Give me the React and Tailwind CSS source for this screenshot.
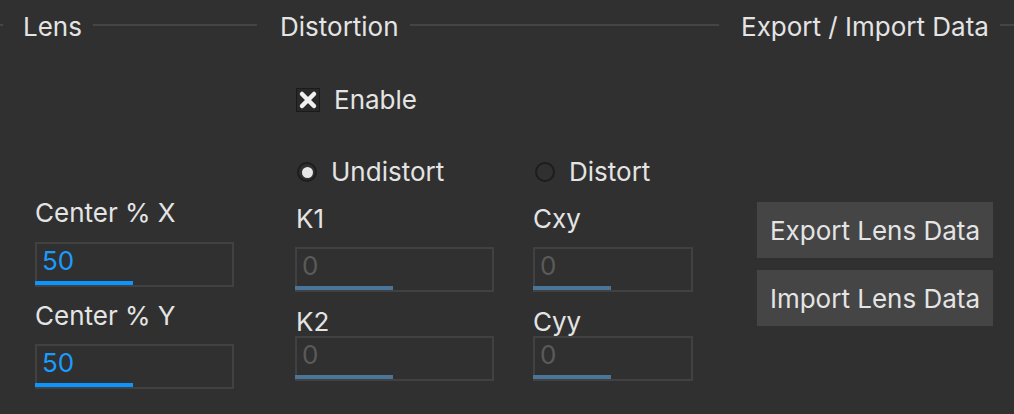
import React from "react";

const Header = ({ title, stub }) => (
  <div className="flex items-center h-[50px]">
    {stub && <div className="w-[3px] h-[2px] bg-[#454545] mr-[20px]" />}
    <span className="mt-[4px] text-[26px] leading-[30px] text-[#e4e4e4] whitespace-nowrap">{title}</span>
    <div className="flex-1 h-[2px] bg-[#454545] ml-[11px]" />
  </div>
);

const Field = ({ value, width, bar, active }) => (
  <div
    className={`relative h-[45px] border-2 border-[#414141] pl-[5px] pt-[2px] ${width}`}
  >
    <span
      className={`text-[26px] leading-[30px] ${active ? "text-[#1a9cff]" : "text-[#5a5a5a]"}`}
    >
      {value}
    </span>
    <div
      className={`absolute -left-[2px] bottom-0 h-[4px] ${bar} ${active ? "bg-[#0d95ff]" : "bg-[#4a7498]"}`}
    />
  </div>
);

const Label = ({ children, className = "" }) => (
  <div className={`text-[26px] leading-[30px] text-[#e4e4e4] ${className}`}>{children}</div>
);

const Radio = ({ checked, label }) => (
  <div className="flex items-center h-[20px]">
    <div className="w-[20px] h-[20px] rounded-full border-2 border-[#1d1d1d] flex items-center justify-center">
      {checked && <div className="w-[11px] h-[11px] rounded-full bg-[#e8e8e8]" />}
    </div>
    <span className="ml-[14px] text-[26px] leading-[30px] text-[#e4e4e4]">{label}</span>
  </div>
);

export default function App() {
  return (
    <div
      className="w-[1014px] h-[414px] bg-[#303030] flex overflow-hidden"
      style={{ fontFamily: "Inter, 'Noto Sans', sans-serif" }}
    >
      {/* Lens */}
      <div className="w-[257px] shrink-0 flex flex-col">
        <Header title="Lens" stub />
        <div className="pl-[35px] flex flex-col">
          <Label className="mt-[148px]">Center % X</Label>
          <div className="mt-[14px]">
            <Field value="50" width="w-[199px]" bar="w-[98px]" active />
          </div>
          <Label className="mt-[14px]">Center % Y</Label>
          <div className="mt-[13px]">
            <Field value="50" width="w-[199px]" bar="w-[98px]" active />
          </div>
        </div>
      </div>

      {/* Distortion */}
      <div className="w-[439px] ml-[23px] shrink-0 flex flex-col">
        <Header title="Distortion" />
        <div className="pl-[15px] flex flex-col">
          <div className="flex items-center mt-[38px] h-[24px] pl-[1px]">
            <div className="w-[24px] h-[24px] border border-[#1a1a1a] bg-[#292929] flex items-center justify-center">
              <svg width="20" height="20" viewBox="0 0 20 20">
                <path d="M4 4 L16 16 M16 4 L4 16" stroke="#f0f0f0" strokeWidth="4.5" strokeLinecap="round" />
              </svg>
            </div>
            <span className="ml-[14px] text-[26px] leading-[30px] text-[#e4e4e4]">Enable</span>
          </div>
          <div className="flex mt-[50px] pl-[2px]">
            <div className="w-[238px]">
              <Radio checked label="Undistort" />
            </div>
            <Radio label="Distort" />
          </div>
          <div className="flex mt-[22px]">
            <div className="w-[238px] flex flex-col">
              <Label className="pl-[1px]">K1</Label>
              <div className="mt-[13px]">
                <Field value="0" width="w-[199px]" bar="w-[98px]" />
              </div>
              <Label className="mt-[15px] pl-[1px]">K2</Label>
              <div className="-mt-[1px]">
                <Field value="0" width="w-[199px]" bar="w-[98px]" />
              </div>
            </div>
            <div className="flex flex-col">
              <Label>Cxy</Label>
              <div className="mt-[13px]">
                <Field value="0" width="w-[160px]" bar="w-[78px]" />
              </div>
              <Label className="mt-[15px]">Cyy</Label>
              <div className="-mt-[1px]">
                <Field value="0" width="w-[160px]" bar="w-[78px]" />
              </div>
            </div>
          </div>
        </div>
      </div>

      {/* Export / Import */}
      <div className="flex-1 ml-[22px] flex flex-col min-w-[290px]">
        <Header title="Export / Import Data" />
        <div className="pl-[16px] flex flex-col gap-[12px] mt-[152px]">
          <button className="w-[236px] h-[56px] bg-[#454545] text-[26px] text-[#e4e4e4] flex items-center justify-center">
            Export Lens Data
          </button>
          <button className="w-[236px] h-[56px] bg-[#454545] text-[26px] text-[#e4e4e4] flex items-center justify-center">
            Import Lens Data
          </button>
        </div>
      </div>
    </div>
  );
}
